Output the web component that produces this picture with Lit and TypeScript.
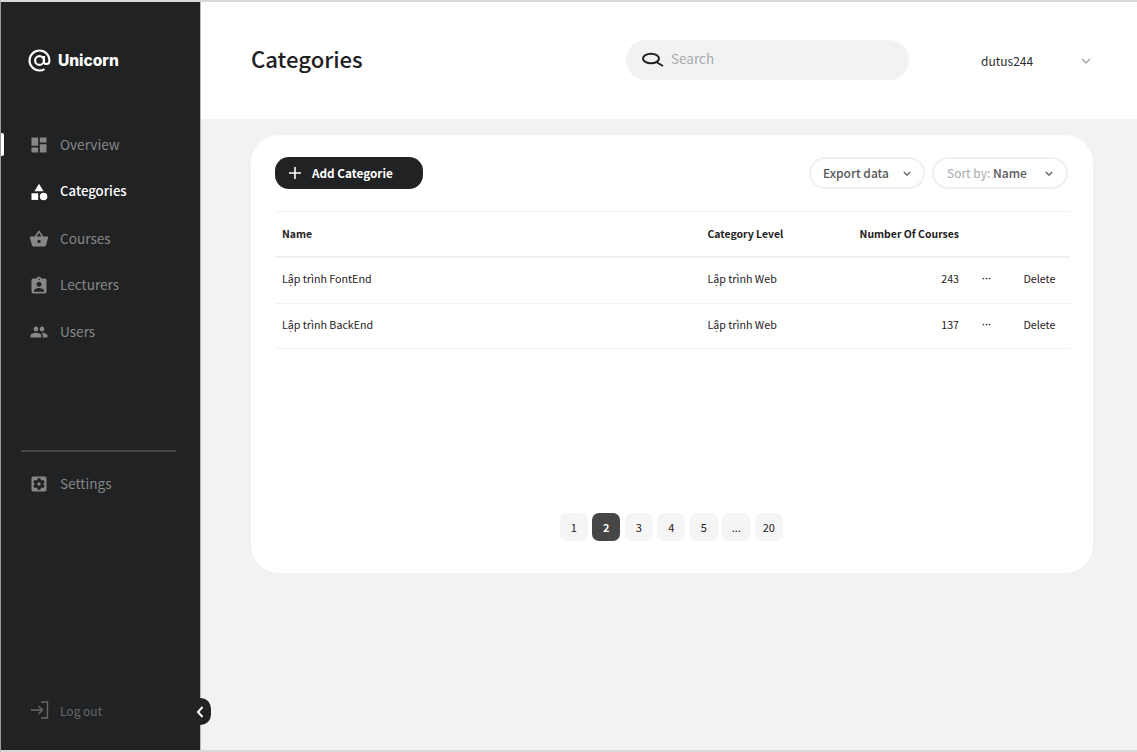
import { LitElement, html, css, svg } from "lit";
import { customElement } from "lit/decorators.js";

const icons: Record<string, ReturnType<typeof svg>> = {
  dashboard: svg`<path d="M3 13h8V3H3v10zm0 8h8v-6H3v6zm10 0h8V11h-8v10zm0-18v6h8V3h-8z"/>`,
  category: svg`<path d="M12 2l-5.5 9h11z"/><circle cx="17.5" cy="17.5" r="4.5"/><path d="M3 13.5h8v8H3z"/>`,
  basket: svg`<path d="M17.21 9l-4.38-6.56c-.19-.28-.51-.42-.83-.42-.32 0-.64.14-.83.43L6.79 9H2c-.55 0-1 .45-1 1 0 .09.01.18.04.27l2.54 9.27c.23.84 1 1.46 1.92 1.46h13c.92 0 1.69-.62 1.93-1.46l2.54-9.27L23 10c0-.55-.45-1-1-1h-4.79zM9 9l3-4.4L15 9H9zm3 8c-1.1 0-2-.9-2-2s.9-2 2-2 2 .9 2 2-.9 2-2 2z"/>`,
  assignment: svg`<path d="M19 3h-4.18C14.4 1.84 13.3 1 12 1c-1.3 0-2.4.84-2.82 2H5c-1.1 0-2 .9-2 2v14c0 1.1.9 2 2 2h14c1.1 0 2-.9 2-2V5c0-1.1-.9-2-2-2zm-7 0c.55 0 1 .45 1 1s-.45 1-1 1-1-.45-1-1 .45-1 1-1zm0 4c1.66 0 3 1.34 3 3s-1.34 3-3 3-3-1.34-3-3 1.34-3 3-3zm6 12H6v-1.4c0-2 4-3.1 6-3.1s6 1.1 6 3.1V19z"/>`,
  people: svg`<path d="M16 11c1.66 0 2.99-1.34 2.99-3S17.66 5 16 5c-1.66 0-3 1.34-3 3s1.34 3 3 3zm-8 0c1.66 0 2.99-1.34 2.99-3S9.66 5 8 5C6.34 5 5 6.34 5 8s1.34 3 3 3zm0 2c-2.33 0-7 1.17-7 3.5V19h14v-2.5c0-2.33-4.67-3.5-7-3.5zm8 0c-.29 0-.62.02-.97.05 1.16.84 1.97 1.97 1.97 3.45V19h6v-2.5c0-2.33-4.67-3.5-7-3.5z"/>`,
  settings: svg`<path d="M12 10c-1.1 0-2 .9-2 2s.9 2 2 2 2-.9 2-2-.9-2-2-2zm7-7H5c-1.11 0-2 .9-2 2v14c0 1.1.89 2 2 2h14c1.11 0 2-.9 2-2V5c0-1.1-.89-2-2-2zm-1.75 9c0 .23-.02.46-.05.68l1.48 1.16c.13.11.17.3.08.45l-1.4 2.42c-.09.15-.27.21-.43.15l-1.74-.7c-.36.28-.76.51-1.18.69l-.26 1.85c-.03.17-.18.3-.35.3h-2.8c-.17 0-.32-.13-.35-.29l-.26-1.85c-.43-.18-.82-.41-1.18-.69l-1.74.7c-.16.06-.34 0-.43-.15l-1.4-2.42c-.09-.15-.05-.34.08-.45l1.48-1.16c-.03-.23-.05-.46-.05-.69 0-.23.02-.46.05-.68l-1.48-1.16c-.13-.11-.17-.3-.08-.45l1.4-2.42c.09-.15.27-.21.43-.15l1.74.7c.36-.28.76-.51 1.18-.69l.26-1.85c.03-.17.18-.3.35-.3h2.8c.17 0 .32.13.35.29l.26 1.85c.43.18.82.41 1.18.69l1.74-.7c.16-.06.34 0 .43.15l1.4 2.42c.09.15.05.34-.08.45l-1.48 1.16c.03.23.05.46.05.69z"/>`,
};

const nav = [
  { label: "Overview", icon: "dashboard", active: false, selected: true, box: "0 0 24 24" },
  { label: "Categories", icon: "category", active: true, selected: false, box: "0 0 24 24" },
  { label: "Courses", icon: "basket", active: false, selected: false, box: "0 0 24 24" },
  { label: "Lecturers", icon: "assignment", active: false, selected: false, box: "0 0 24 24" },
  { label: "Users", icon: "people", active: false, selected: false, box: "-1 -1 26 26" },
];

const rows = [
  { name: "Lập trình FontEnd", level: "Lập trình Web", count: 243 },
  { name: "Lập trình BackEnd", level: "Lập trình Web", count: 137 },
];

const pages = ["1", "2", "3", "4", "5", "...", "20"];

const chevron = svg`<path d="M1 1l4 4 4-4" fill="none" stroke="currentColor" stroke-width="1.5"/>`;

@customElement("app-root")
export class AppRoot extends LitElement {
  static styles = css`
    :host {
      display: block;
      width: 1137px;
      height: 752px;
      overflow: hidden;
      font-family: "Noto Sans CJK SC", "Source Sans Pro", "Noto Sans", sans-serif;
      color: #1e2022;
    }
    * { box-sizing: border-box; }
    .frame {
      position: relative;
      display: flex;
      width: 1137px;
      height: 752px;
      border-top: 2px solid #d9d9d9;
      border-bottom: 2px solid #d9d9d9;
      border-left: 1px solid #9a9a9a;
      background: #f2f2f2;
    }
    .sidebar {
      width: 200px;
      flex: none;
      background: #202224;
      border-right: 1px solid #b8b8b8;
      display: flex;
      flex-direction: column;
      color: #878787;
    }
    .logo {
      display: flex;
      align-items: center;
      gap: 7px;
      height: 117px;
      padding: 0 0 0 27px;
      margin-bottom: 3px;
      color: #fff;
      font-family: Inter, sans-serif;
      font-weight: 800;
      font-size: 15.5px;
      letter-spacing: 0;
    }
    .logo svg { width: 23px; height: 23px; }
    .item {
      position: relative;
      display: flex;
      align-items: center;
      height: 46.75px;
      padding-left: 28px;
      gap: 11px;
      font-size: 13.6px;
    }
    .item span { position: relative; top: -1.3px; }
    .item svg { width: 20px; height: 20px; fill: currentColor; flex: none; }
    .item.active { color: #fff; font-weight: 500; font-size: 13.2px; }
    .item.selected::before {
      content: "";
      position: absolute;
      left: 0;
      top: 11px;
      width: 3px;
      height: 23px;
      background: #fff;
      border-radius: 0 2px 2px 0;
    }
    .divider {
      height: 2px;
      margin: 94px 24px 9px 20px;
      background: #444648;
      flex: none;
    }
    .logout {
      margin-top: auto;
      margin-bottom: 17px;
      height: 46px;
      display: flex;
      align-items: center;
      gap: 10px;
      padding-left: 29px;
      font-size: 12px;
      color: #66686a;
    }
    .logout svg { width: 20px; height: 20px; fill: none; stroke: currentColor; stroke-width: 1.4; flex: none; }
    .collapse {
      position: absolute;
      left: 189px;
      top: 696px;
      width: 21px;
      height: 27px;
      border-radius: 12px;
      background: #202224;
      display: flex;
      align-items: center;
      justify-content: center;
      color: #fff;
    }
    .collapse svg { width: 8px; height: 12px; margin-right: 1px; }
    .main { flex: 1; min-width: 0; display: flex; flex-direction: column; }
    .header {
      height: 117px;
      flex: none;
      background: #fff;
      display: grid;
      grid-template-columns: 375px 283px auto 1fr;
      align-items: center;
      padding-left: 50px;
    }
    h1 { margin: 0 0 4px; font-size: 22.1px; font-weight: 500; color: #1e2022; line-height: 1; }
    .search {
      height: 40px;
      margin-bottom: 1px;
      background: #f2f2f2;
      border-radius: 20px;
      display: flex;
      align-items: center;
      gap: 5px;
      padding-left: 15px;
      color: #a9a9a9;
      font-size: 13.5px;
    }
    .search svg { width: 25px; height: 16px; flex: none; }
    .search span { position: relative; top: -2px; }
    .user { margin: 0 0 1px 72px; font-size: 12px; color: #2a2c2e; }
    .user-chev { justify-self: end; margin-right: 46px; color: #a8a8a8; display: flex; margin-top: 2px; }
    .user-chev svg { width: 10px; height: 7px; }
    .content { flex: 1; padding: 16px 44px 0 50px; }
    .card {
      height: 438px;
      background: #fff;
      border-radius: 28px;
      padding: 22px 24px 32px 23.5px;
      display: flex;
      flex-direction: column;
    }
    .toolbar {
      display: flex;
      align-items: center;
      height: 32px;
      margin-bottom: 22px;
      padding-right: 1.500px;
    }
    .add {
      width: 148.5px;
      height: 32px;
      border-radius: 14px;
      border: none;
      background: #202224;
      color: #fff;
      display: flex;
      align-items: center;
      gap: 11px;
      padding: 0 0 1px 14.5px;
      font: 600 11.75px "Noto Sans CJK SC", sans-serif;
    }
    .add svg { width: 12px; height: 12px; }
    .pills { margin-left: auto; display: flex; gap: 7px; }
    .pill {
      height: 31.5px;
      border: 2px solid #f0f0f0;
      border-radius: 16px;
      background: #fff;
      display: flex;
      align-items: center;
      font-size: 12px;
      font-weight: 500;
      color: #56585a;
      padding: 0 12px 1.5px 12.5px;
      justify-content: space-between;
    }
    .pill.export { width: 116px; }
    .pill.sort { width: 136px; padding: 0 13px 1.5px 13.5px; }
    .pill .muted { color: #a9a9a9; font-weight: 400; }
    .pill svg { color: #56585a; width: 8px; height: 6px; margin-top: 3px; }
    .table {
      border-top: 1px solid #f2f2f2;
      width: 795px;
      font-size: 10.7px;
      color: #1e2022;
    }
    .row {
      display: grid;
      grid-template-columns: 425.5px 150px 116px 50px 53.5px;
      align-items: center;
      height: 45.5px;
      border-bottom: 1px solid #f2f2f2;
      padding-bottom: 2.6px;
    }
    .row.head {
      height: 46px;
      border-bottom: 2px solid #f0f0f0;
      font-weight: 700;
      font-size: 10.45px;
      padding-bottom: 1px;
    }
    .row > div { padding-left: 7.5px; white-space: nowrap; }
    .row > .num { text-align: right; padding: 0 7px 0 0; }
    .row > .dots { padding-left: 16px; font-family: "Liberation Sans", sans-serif; font-size: 9.5px; font-weight: 700; }
    .pager {
      margin-top: auto;
      display: flex;
      justify-content: center;
      gap: 4.75px;
      padding-right: 1px;
    }
    .page {
      width: 27.75px;
      height: 28px;
      border-radius: 7px;
      background: #f5f5f5;
      display: flex;
      align-items: center;
      justify-content: center;
      font-size: 11px;
      color: #1e2022;
    }
    .page.on { background: #464646; color: #fff; font-weight: 700; }
  `;

  render() {
    return html`
      <div class="frame">
        <aside class="sidebar">
          <div class="logo">
            <svg viewBox="0 0 24 24" fill="none" stroke="#fff" stroke-width="2.2">
              <circle cx="12" cy="12" r="4.6" />
              <path d="M16.6 7.4v5.9c0 3.4 5.8 3.4 5.8-1.3C22.4 6.2 17.8 1.6 12 1.6S1.6 6.2 1.6 12 6.2 22.4 12 22.4c2 0 3.6-.4 5.2-1.4" />
            </svg>
            <span>Unicorn</span>
          </div>
          ${nav.map(
            (n) => html`<div class="item ${n.active ? "active" : ""} ${n.selected ? "selected" : ""}">
              <svg viewBox=${n.box}>${icons[n.icon]}</svg>
              <span>${n.label}</span>
            </div>`
          )}
          <div class="divider"></div>
          <div class="item">
            <svg viewBox="0 0 24 24">${icons.settings}</svg>
            <span>Settings</span>
          </div>
          <div class="logout">
            <svg viewBox="0 0 20 20">
              <path d="M1 10h11M8.5 6l4 4-4 4M11 2h6.5v16H11" />
            </svg>
            <span>Log out</span>
          </div>
        </aside>
        <div class="collapse">
          <svg viewBox="0 0 8 12"><path d="M6.5 1L2 6l4.500 5" fill="none" stroke="currentColor" stroke-width="2" /></svg>
        </div>
        <main class="main">
          <header class="header">
            <h1>Categories</h1>
            <div class="search">
              <svg viewBox="0 0 25 16" fill="none" stroke="#1e2022" stroke-width="2">
                <ellipse cx="10" cy="6.500" rx="8" ry="4.800" />
                <path d="M16 10.500l6 3.500" />
              </svg>
              <span>Search</span>
            </div>
            <div class="user">dutus244</div>
            <div class="user-chev"><svg viewBox="0 0 10 7">${chevron}</svg></div>
          </header>
          <section class="content">
            <div class="card">
              <div class="toolbar">
                <button class="add">
                  <svg viewBox="0 0 12 12"><path d="M6 0v12M0 6h12" stroke="#fff" stroke-width="1.6" /></svg>
                  Add Categorie
                </button>
                <div class="pills">
                  <div class="pill export"><span>Export data</span><svg viewBox="0 0 10 7">${chevron}</svg></div>
                  <div class="pill sort"><span><span class="muted">Sort by:</span> Name</span><svg viewBox="0 0 10 7">${chevron}</svg></div>
                </div>
              </div>
              <div class="table">
                <div class="row head">
                  <div>Name</div>
                  <div>Category Level</div>
                  <div class="num">Number Of Courses</div>
                  <div></div>
                  <div></div>
                </div>
                ${rows.map(
                  (r) => html`<div class="row">
                    <div>${r.name}</div>
                    <div>${r.level}</div>
                    <div class="num">${r.count}</div>
                    <div class="dots">···</div>
                    <div>Delete</div>
                  </div>`
                )}
              </div>
              <div class="pager">
                ${pages.map((p) => html`<div class="page ${p === "2" ? "on" : ""}">${p}</div>`)}
              </div>
            </div>
          </section>
        </main>
      </div>
    `;
  }
}
